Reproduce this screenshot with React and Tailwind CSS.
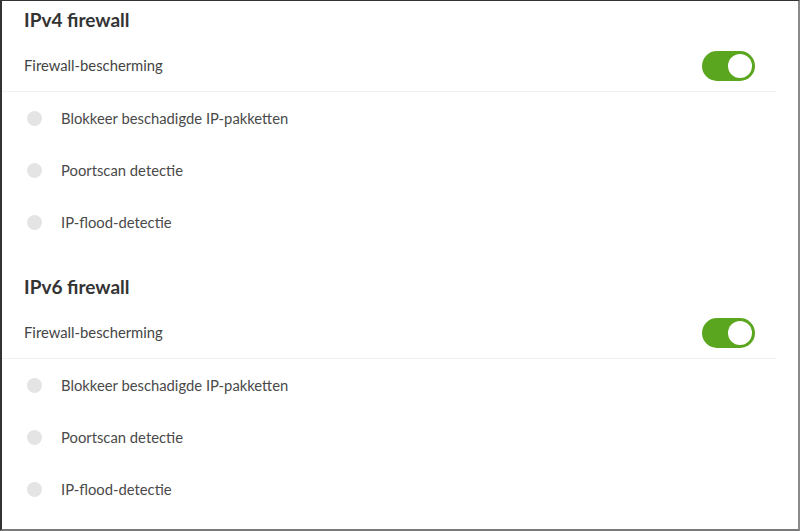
function Toggle() {
  return (
    <div className="flex h-[30px] w-[53px] items-center justify-end rounded-full bg-[#5aa61f] pr-[3px]">
      <div className="h-[24px] w-[24px] rounded-full bg-white" />
    </div>
  )
}

function Option({ label }) {
  return (
    <div className="flex h-[52px] items-center pl-[25px]">
      <span className="h-[15px] w-[15px] rounded-full bg-[#e4e4e4]" />
      <span className="ml-[19px] text-[14.8px] text-[#4a4a4a]">{label}</span>
    </div>
  )
}

function FirewallSection({ title }) {
  return (
    <section>
      <h2 className="flex h-[39px] items-center pl-[22px] text-[19px] font-bold text-[#333]">
        {title}
      </h2>
      <div className="mr-[22px] flex h-[52px] items-center justify-between border-b border-[#f0f0f0] pl-[22px] pr-[21px]">
        <span className="text-[14.8px] text-[#444]">Firewall-bescherming</span>
        <Toggle />
      </div>
      <Option label="Blokkeer beschadigde IP-pakketten" />
      <Option label="Poortscan detectie" />
      <Option label="IP-flood-detectie" />
    </section>
  )
}

export default function App() {
  return (
    <div className="h-[531px] w-[800px] overflow-hidden border-t border-l-2 border-b-2 border-r-2 border-t-[#333] border-l-[#333] border-r-[#8a8a8a] border-b-[#7a7a7a] bg-white font-['Lato',sans-serif]">
      <FirewallSection title="IPv4 firewall" />
      <div className="h-[20px]" />
      <FirewallSection title="IPv6 firewall" />
    </div>
  )
}
